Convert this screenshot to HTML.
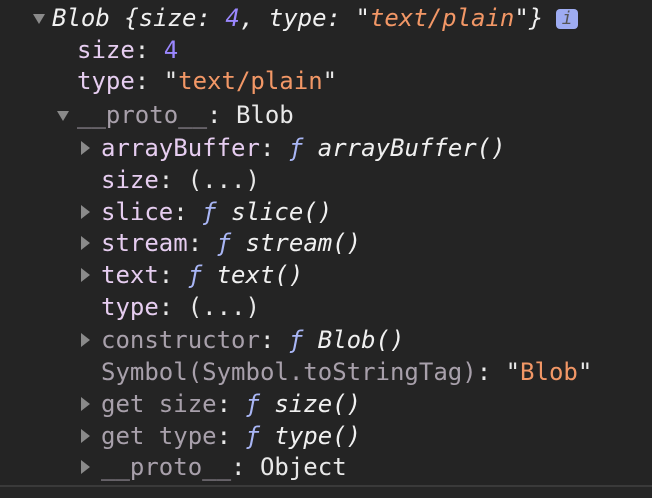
<!DOCTYPE html>
<html><head><meta charset="utf-8"><style>
html,body{margin:0;padding:0;}
body{width:652px;height:498px;background:#242424;position:relative;overflow:hidden;font-family:"DejaVu Sans Mono","Liberation Mono",monospace;font-size:24px;color:#e8e8e8;}
.r{position:absolute;height:32px;line-height:32px;white-space:pre;}
.k{color:#e6cdf0}
.d{color:#a8a0ab}
.n{color:#9b87ff}
.s{color:#f29766}
.f{color:#a9b6f5;font-style:italic}
.i{font-style:italic;color:#f0f0f0}
.td{position:absolute;width:0;height:0;border-left:6.5px solid transparent;border-right:6.5px solid transparent;border-top:10px solid #8a8a8a;}
.tr{position:absolute;width:0;height:0;border-top:7px solid transparent;border-bottom:7px solid transparent;border-left:9px solid #8a8a8a;}
.info{position:absolute;left:556px;top:9px;width:22px;height:20px;background:#9eacf2;border-radius:4px;color:#555;font-style:italic;font-size:18px;line-height:20px;text-align:center;font-family:"DejaVu Sans Mono",monospace;}
.sep{position:absolute;left:0;top:485px;width:652px;height:2px;background:#3a3a3a;}
.bot{position:absolute;left:0;top:487px;width:652px;height:11px;background:#262626;}
</style></head><body>
<div class="td" style="left:33px;top:14px"></div>
<div class="r i" style="left:52px;top:2px">Blob {size: <span class="n">4</span>, type: "<span class="s">text/plain</span>"}</div>
<div class="info">i</div>
<div class="r" style="left:77px;top:34px"><span class="k">size</span>: <span class="n">4</span></div>
<div class="r" style="left:77px;top:65px"><span class="k">type</span>: "<span class="s">text/plain</span>"</div>
<div class="td" style="left:57px;top:111px"></div>
<div class="r" style="left:77px;top:99px"><span class="d">__proto__</span>: Blob</div>
<div class="tr" style="left:81px;top:141px"></div>
<div class="r" style="left:101px;top:132px"><span class="k">arrayBuffer</span>: <span class="f">ƒ</span> <span class="i">arrayBuffer()</span></div>
<div class="r" style="left:101px;top:164px"><span class="k">size</span>: (...)</div>
<div class="tr" style="left:81px;top:205px"></div>
<div class="r" style="left:101px;top:196px"><span class="k">slice</span>: <span class="f">ƒ</span> <span class="i">slice()</span></div>
<div class="tr" style="left:81px;top:236px"></div>
<div class="r" style="left:101px;top:227px"><span class="k">stream</span>: <span class="f">ƒ</span> <span class="i">stream()</span></div>
<div class="tr" style="left:81px;top:268px"></div>
<div class="r" style="left:101px;top:259px"><span class="k">text</span>: <span class="f">ƒ</span> <span class="i">text()</span></div>
<div class="r" style="left:101px;top:291px"><span class="k">type</span>: (...)</div>
<div class="tr" style="left:81px;top:333px"></div>
<div class="r" style="left:101px;top:324px"><span class="d">constructor</span>: <span class="f">ƒ</span> <span class="i">Blob()</span></div>
<div class="r" style="left:101px;top:356px"><span class="d">Symbol(Symbol.toStringTag)</span>: "<span class="s">Blob</span>"</div>
<div class="tr" style="left:81px;top:397px"></div>
<div class="r" style="left:101px;top:388px"><span class="d">get size</span>: <span class="f">ƒ</span> <span class="i">size()</span></div>
<div class="tr" style="left:81px;top:429px"></div>
<div class="r" style="left:101px;top:420px"><span class="d">get type</span>: <span class="f">ƒ</span> <span class="i">type()</span></div>
<div class="tr" style="left:81px;top:460px"></div>
<div class="r" style="left:101px;top:451px"><span class="d">__proto__</span>: Object</div>
<div class="sep"></div>
<div class="bot"></div>
</body></html>
